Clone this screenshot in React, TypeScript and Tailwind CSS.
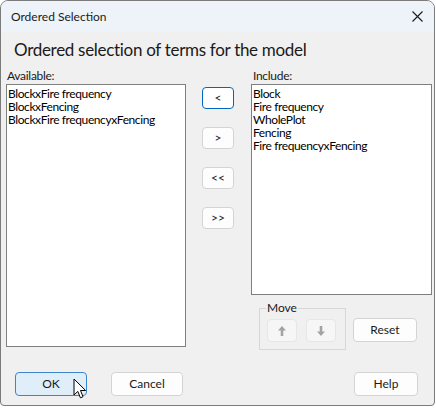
import React from "react";

const font = { fontFamily: 'Lato, "Noto Sans", sans-serif' };

interface BtnProps {
  children: React.ReactNode;
  className?: string;
}

const Btn: React.FC<BtnProps> = ({ children, className = "" }) => (
  <div
    className={`flex items-center justify-center rounded-[4px] border text-[12px] text-[#1a1a1a] ${className}`}
  >
    {children}
  </div>
);

const ListBox: React.FC<{ items: string[]; className?: string }> = ({ items, className = "" }) => (
  <div className={`border border-[#7f7f7f] bg-white pl-[1px] pt-[2px] ${className}`}>
    {items.map((it) => (
      <div key={it} className="text-[12px] leading-[13px] tracking-[-0.4px] text-black whitespace-nowrap">
        {it}
      </div>
    ))}
  </div>
);

const Arrow: React.FC<{ down?: boolean }> = ({ down }) => (
  <svg width="10" height="12" viewBox="0 0 10 12" className={down ? "rotate-180" : ""}>
    <path d="M5 1 L9 5.5 H6.3 V11 H3.7 V5.5 H1 Z" fill="#a3a3a3" />
  </svg>
);

export default function App() {
  return (
    <div className="w-[436px] h-[408px] bg-white" style={font}>
      <div className="w-[435px] h-[406px] border border-[#7b7b7b] rounded-t-[8px] rounded-b-[4px] overflow-hidden flex flex-col bg-[#f0f0f0] relative">
        {/* Title bar */}
        <div className="h-[31px] bg-[#eef2f9] flex items-center justify-between pl-[10px] pr-[11px]">
          <span className="text-[12px] text-[#1a1a1a]">Ordered Selection</span>
          <svg width="11" height="11" viewBox="0 0 11 11">
            <path d="M0.5 0.5 L10.5 10.5 M10.5 0.5 L0.5 10.5" stroke="#1a1a1a" strokeWidth="1.1" />
          </svg>
        </div>

        {/* Heading */}
        <div className="h-[36px] flex items-center pl-[13px] text-[17px] tracking-[-0.3px] text-[#1a1a1a]">
          Ordered selection of terms for the model
        </div>

        {/* Lists */}
        <div className="flex pl-[5px]">
          <div className="w-[180px] flex flex-col">
            <div className="h-[16px] leading-[16px] text-[12px] tracking-[-0.3px] pl-[1px] text-[#1a1a1a]">Available:</div>
            <ListBox
              className="h-[263px]"
              items={["BlockxFire frequency", "BlockxFencing", "BlockxFire frequencyxFencing"]}
            />
          </div>

          <div className="ml-[16px] w-[32px] pt-[19px] flex flex-col gap-[18px]">
            <Btn className="h-[22px] border-[#0067c0] bg-white">&lt;</Btn>
            <Btn className="h-[22px] border-[#d4d4d4] bg-[#fdfdfd]">&gt;</Btn>
            <Btn className="h-[22px] border-[#d4d4d4] bg-[#fdfdfd]">&lt;&lt;</Btn>
            <Btn className="h-[22px] border-[#d4d4d4] bg-[#fdfdfd]">&gt;&gt;</Btn>
          </div>

          <div className="ml-[17px] w-[181px] flex flex-col">
            <div className="h-[16px] leading-[16px] text-[12px] tracking-[-0.3px] pl-[2px] text-[#1a1a1a]">Include:</div>
            <ListBox
              className="h-[211px]"
              items={["Block", "Fire frequency", "WholePlot", "Fencing", "Fire frequencyxFencing"]}
            />
            <div className="flex mt-[13px]">
              {/* Move group */}
              <div className="ml-[8px] w-[87px] h-[42px] border border-[#d7d7d7] relative flex gap-[9px] pl-[7px] pt-[10px]">
                <span className="absolute left-[6px] -top-[8px] px-[1px] bg-[#f0f0f0] text-[12px] leading-[14px] text-[#1a1a1a]">
                  Move
                </span>
                <div className="w-[30px] h-[23px] rounded-[4px] border border-[#e6e6e6] bg-[#f6f6f6] flex items-center justify-center">
                  <Arrow />
                </div>
                <div className="w-[30px] h-[23px] rounded-[4px] border border-[#e6e6e6] bg-[#f6f6f6] flex items-center justify-center">
                  <Arrow down />
                </div>
              </div>
              <Btn className="ml-[7px] mt-[10px] w-[64px] h-[24px] border-[#d4d4d4] bg-[#fdfdfd]">Reset</Btn>
            </div>
          </div>
        </div>

        {/* Bottom buttons */}
        <div className="flex mt-[22px] pl-[14px]">
          <Btn className="w-[72px] h-[24px] border-[#3c84cc] bg-[#e0eef9]">OK</Btn>
          <Btn className="ml-[24px] w-[72px] h-[24px] border-[#d4d4d4] bg-[#fdfdfd]">Cancel</Btn>
          <Btn className="ml-[171px] w-[64px] h-[24px] border-[#d4d4d4] bg-[#fdfdfd]">Help</Btn>
        </div>

        {/* Mouse cursor */}
        <svg
          className="absolute left-[72px] top-[377px]"
          width="14"
          height="22"
          viewBox="0 0 14 22"
        >
          <path
            d="M1 1 L1 17 L4.8 13.4 L7.4 19.8 L10 18.7 L7.5 12.5 L12.6 12.5 Z"
            fill="white"
            stroke="black"
            strokeWidth="1"
            strokeLinejoin="round"
          />
        </svg>
      </div>
    </div>
  );
}
